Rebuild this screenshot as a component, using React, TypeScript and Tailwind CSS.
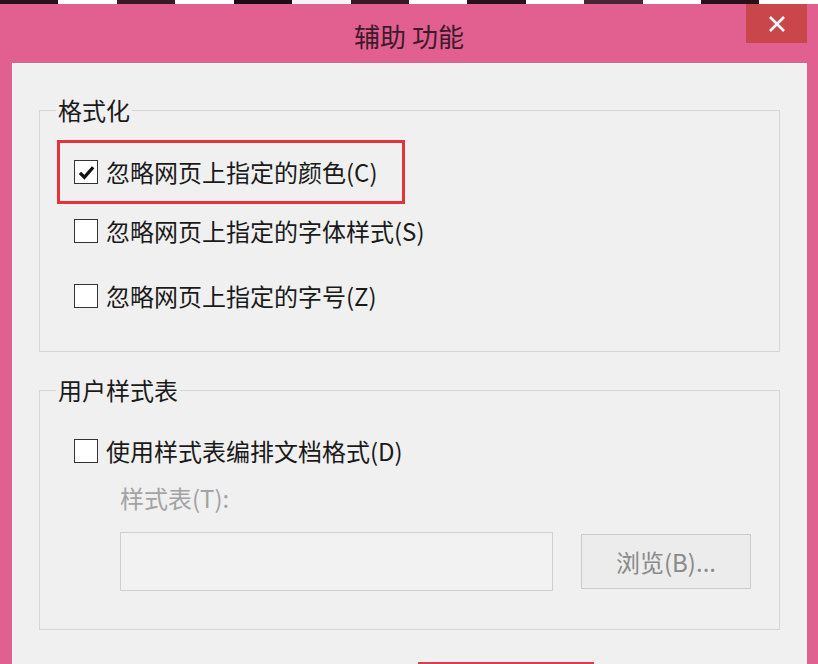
const FONT = { fontFamily: '"Microsoft YaHei", "Noto Sans CJK SC", "Noto Sans", sans-serif' };

const Checkbox = ({ checked = false }: { checked?: boolean }) => (
  <span className="flex h-[24px] w-[24px] shrink-0 items-center justify-center border-[1.5px] border-[#333] bg-white">
    {checked && (
      <svg viewBox="0 0 16 16" className="h-[19px] w-[19px]">
        <path d="M2.5 8.3 L6.2 12 L13.6 3.6" fill="none" stroke="#111" strokeWidth="2.8" />
      </svg>
    )}
  </span>
);

const Option = ({ label, checked }: { label: string; checked?: boolean }) => (
  <div className="flex items-center gap-[8px]">
    <Checkbox checked={checked} />
    <span className="text-[24px] leading-[32px] text-[#1a1a1a]">{label}</span>
  </div>
);

// top strip: the page behind the dialog peeking through
const strip = ["#2a1018", "#fff", "#3a1a22", "#fff", "#1d0c12", "#f5f5f5", "#3a1a22", "#fff", "#2a1018", "#fff", "#4a2430", "#fff", "#2a1018", "#fff"];

export default function App() {
  return (
    <div className="flex h-[664px] w-[818px] flex-col overflow-hidden bg-[#e1608f]" style={FONT}>
      <div className="flex h-[4px] shrink-0">
        {strip.map((c, i) => (
          <div key={i} className="flex-1" style={{ background: c }} />
        ))}
      </div>

      {/* title bar */}
      <div className="relative flex h-[59px] shrink-0 items-start justify-center">
        <span className="mt-[15px] text-[26px] leading-[34px] text-[#3d1a2b]">辅助 功能</span>
        <button className="absolute right-[11px] top-0 flex h-[39px] w-[61px] items-center justify-center bg-[#c9464b]">
          <svg viewBox="0 0 18 18" className="h-[18px] w-[18px]">
            <path d="M2 2 L16 16 M16 2 L2 16" stroke="#fff" strokeWidth="2.6" />
          </svg>
        </button>
      </div>

      {/* dialog body */}
      <div className="ml-[12px] mr-[11px] flex-1 border border-[#f8f8f8] bg-[#f0f0f1] pl-[26px] pr-[26px] pt-[30px]">
        <fieldset className="border border-[#d6d6d6] pb-[37px]">
          <legend className="ml-[16px] px-[2px] text-[24px] leading-[32px] text-[#1a1a1a]">格式化</legend>
          <div className="ml-[17px] mt-[14px] flex h-[64px] w-[348px] items-center border-[3px] border-[#e2353b] pl-[14px]">
            <Option label="忽略网页上指定的颜色(C)" checked />
          </div>
          <div className="ml-[34px] mt-[9px] flex h-[36px] items-center">
            <Option label="忽略网页上指定的字体样式(S)" />
          </div>
          <div className="ml-[34px] mt-[29px] flex h-[36px] items-center">
            <Option label="忽略网页上指定的字号(Z)" />
          </div>
        </fieldset>

        <fieldset className="mt-[22px] border border-[#d6d6d6] pb-[38px]">
          <legend className="ml-[16px] px-[2px] text-[24px] leading-[32px] text-[#1a1a1a]">用户样式表</legend>
          <div className="ml-[34px] mt-[27px] flex h-[36px] items-center">
            <Option label="使用样式表编排文档格式(D)" />
          </div>
          <div className="ml-[80px] mt-[13px] text-[24px] leading-[32px] text-[#a3a3a3]">样式表(T):</div>
          <div className="ml-[80px] mt-[18px] flex items-center gap-[28px]">
            <div className="h-[59px] w-[433px] border border-[#cfcfcf] bg-[#f2f2f2]" />
            <button className="h-[55px] w-[170px] border border-[#cbcbcb] bg-[#ececec] text-[24px] text-[#8a8a8a]">
              浏览(B)...
            </button>
          </div>
        </fieldset>

        <div className="ml-[379px] mt-[32px] h-[40px] w-[176px] bg-[#d8404a]" />
      </div>
    </div>
  );
}
